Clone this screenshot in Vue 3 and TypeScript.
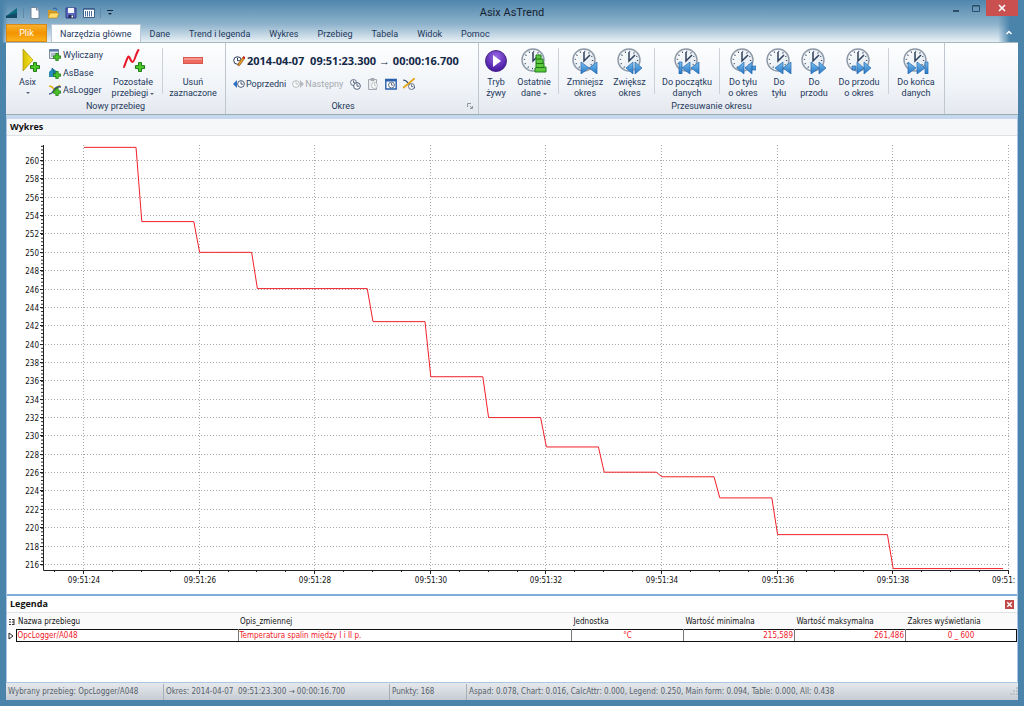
<script setup lang="ts">
import { ref } from 'vue'

interface BigButton {
  id: string
  lines: string[]
  width: number
  menu?: boolean
}

const tabs = ['Narzędzia główne', 'Dane', 'Trend i legenda', 'Wykres', 'Przebieg', 'Tabela', 'Widok', 'Pomoc']
const activeTab = ref(tabs[0])

const periodButtons: (BigButton | null)[] = [
  { id: 'live', lines: ['Tryb', 'żywy'], width: 34 },
  { id: 'last', lines: ['Ostatnie', 'dane'], width: 42, menu: true },
  null,
  { id: 'shrink', lines: ['Zmniejsz', 'okres'], width: 46 },
  { id: 'grow', lines: ['Zwiększ', 'okres'], width: 43 },
  null,
  { id: 'start', lines: ['Do początku', 'danych'], width: 58 },
  null,
  { id: 'backp', lines: ['Do tyłu', 'o okres'], width: 40 },
  { id: 'back', lines: ['Do', 'tyłu'], width: 32 },
  { id: 'fwd', lines: ['Do', 'przodu'], width: 38 },
  { id: 'fwdp', lines: ['Do przodu', 'o okres'], width: 52 },
  null,
  { id: 'end', lines: ['Do końca', 'danych'], width: 48 },
]

const overlays: Record<string, string> = {
  shrink: 'M9 14l8 6-8 6zM25 14v12l-8-6z',
  grow: 'M16 14v12l-7-6zM18 14l7 6-7 6z',
  start: 'M5 14h3v12H5zM16 14v12l-8-6zM25 14v12l-8-6z',
  backp: 'M14 14v12l-7-6zM22 14v12l-7-6zM22 18h4v4h-4z',
  back: 'M17 14v12l-8-6zM25 14v12l-8-6z',
  fwd: 'M10 14l8 6-8 6zM18 14l7 6-7 6z',
  fwdp: 'M6 18h4v4H6zM11 14l7 6-7 6zM18 14l7 6-7 6z',
  end: 'M5 14l8 6-8 6zM14 14l8 6-8 6zM22 14h3v12h-3z',
}

const X0 = 77
const SEC = 57.8
const Y0 = 25
const UNIT = 9.18
const px = (t: number) => X0 + (t - 24) * SEC
const py = (v: number) => Y0 + (260 - v) * UNIT

const levels: [number, number][] = [
  [24, 261.486], [25, 253.4], [26, 250.05], [27, 246.1], [29, 242.5], [30, 236.5], [31, 232.05],
  [32, 228.85], [33, 226.1], [34, 225.6], [35, 223.3], [36, 219.3], [38, 215.6],
]
const linePoints = levels
  .map(([t, v], i) => {
    const end = i + 1 < levels.length ? levels[i + 1][0] - 0.1 : 39.9
    return `${px(t)},${py(v)} ${px(end)},${py(v)}`
  })
  .join(' ')

const yMajor = Array.from({ length: 23 }, (_, i) => 260 - i * 2)
const yMinor = Array.from({ length: 115 }, (_, i) => 261.6 - i * 0.4)
const xMajor = Array.from({ length: 9 }, (_, i) => 24 + i * 2)
const xMinor = Array.from({ length: 33 }, (_, i) => 23.5 + i * 0.5)

const columns = ['Nazwa przebiegu', 'Opis_zmiennej', 'Jednostka', 'Wartość minimalna', 'Wartość maksymalna', 'Zakres wyświetlania']
const legendOpen = ref(true)
</script>

<template>
  <div class="window">
    <svg class="defs" aria-hidden="true">
      <defs>
        <linearGradient id="gBlue" x1="0" y1="0" x2="0" y2="1">
          <stop offset="0" stop-color="#7cc0ee" /><stop offset="1" stop-color="#2474c4" />
        </linearGradient>
        <linearGradient id="gFace" x1="0" y1="0" x2="1" y2="1">
          <stop offset="0" stop-color="#ffffff" /><stop offset="1" stop-color="#dde6ee" />
        </linearGradient>
        <radialGradient id="gLive" cx=".5" cy=".3" r=".7">
          <stop offset="0" stop-color="#9a6be8" /><stop offset="1" stop-color="#41129c" />
        </radialGradient>
        <linearGradient id="gYellow" x1="0" y1="0" x2="1" y2="0">
          <stop offset="0" stop-color="#d8c000" /><stop offset="1" stop-color="#f8e428" />
        </linearGradient>
        <symbol id="clock" viewBox="0 0 26 26">
          <circle cx="12" cy="12" r="11" fill="url(#gFace)" stroke="#8e99a8" stroke-width="1.4" />
          <circle cx="12" cy="12" r="8.6" fill="none" stroke="#3c4c66" stroke-width="1.4" stroke-dasharray="1 3.5" />
          <path d="M12 4v9l6-6" fill="none" stroke="#2f405c" stroke-width="1.5" />
        </symbol>
        <symbol id="plus" viewBox="0 0 10 10">
          <path d="M3.5 .6h3v3h3v3h-3v3h-3v-3h-3v-3h3z" fill="#4cc828" stroke="#1c7a12" stroke-width="1" />
        </symbol>
        <symbol id="miniclock" viewBox="0 0 10 10">
          <circle cx="5" cy="5" r="4.2" fill="#fff" stroke="currentColor" />
          <path d="M5 2v3.2h2.6" fill="none" stroke="currentColor" />
        </symbol>
      </defs>
    </svg>

    <header class="titlebar">
      <div class="quick">
        <svg class="logo" viewBox="0 0 12 12"><path d="M0 9L11 1v10H0z" fill="#0b6a7c" /><path d="M0 9l11-3v5H0z" fill="#124a66" /></svg>
        <i class="qsep"></i>
        <button aria-label="Nowy"><svg viewBox="0 0 12 12"><path d="M2 .5h5.500L10 3v8.500H2z" fill="#fff" stroke="#72839a" /><path d="M7.500 .5V3H10" fill="#dde6ef" stroke="#72839a" /></svg></button>
        <button aria-label="Otwórz"><svg viewBox="0 0 12 12"><path d="M1 3h4l1 1h4v7H1z" fill="#d59a26" /><path d="M3 6h9l-2 5H1z" fill="#ffdc6a" stroke="#b98012" stroke-width=".6" /><path d="M6 2q3-2 4 1" fill="none" stroke="#2d68ae" stroke-width="1.2" /></svg></button>
        <button aria-label="Zapisz"><svg viewBox="0 0 12 12"><path d="M1 1h10v10H1z" fill="#5a68be" stroke="#343e86" /><path d="M3 1h6v5H3z" fill="#f4f6fc" /><path d="M3.500 8h5v3h-5z" fill="#242b55" /><path d="M6.500 8.500h1.500v2H6.500z" fill="#fff" /></svg></button>
        <button aria-label="Tabela"><svg viewBox="0 0 12 12"><path d="M.5 1.500h11v9H.5z" fill="#fff" stroke="#38618e" /><path d="M.5 2h11" stroke="#38618e" stroke-width="1.500" /><path d="M2.500 4v5.500M4.500 4v5.500M6.500 4v5.500M8.500 4v5.500" stroke="#4a6f98" /></svg></button>
        <i class="qsep"></i>
        <button class="more" aria-label="Dostosuj"><svg viewBox="0 0 8 8"><path d="M1 1.500h6" stroke="#17283d" /><path d="M2 4h4L4 6z" fill="#17283d" /></svg></button>
      </div>
      <h1>Asix AsTrend</h1>
      <div class="winbtns">
        <button class="wb" aria-label="Minimalizuj"><svg viewBox="0 0 10 10"><path d="M2 7h6" stroke="#2c4d68" stroke-width="2" /></svg></button>
        <button class="wb" aria-label="Maksymalizuj"><svg viewBox="0 0 10 10"><path d="M1.500 1.500h7v6h-7zM1.500 2h7" fill="none" stroke="#2c4d68" /></svg></button>
        <button class="close" aria-label="Zamknij"><svg viewBox="0 0 10 10"><path d="M2 2l6 6M8 2L2 8" stroke="#fff" stroke-width="1.600" /></svg></button>
      </div>
    </header>

    <nav class="tabs">
      <button class="file">Plik</button>
      <button v-for="t in tabs" :key="t" class="tab" :class="{ active: t === activeTab }" @click="activeTab = t">{{ t }}</button>
      <button class="fold" aria-label="Zwiń wstążkę"><svg viewBox="0 0 8 8"><path d="M1.500 5L4 2.500 6.500 5" fill="none" stroke="#fff" stroke-width="1.500" /></svg></button>
    </nav>

    <section class="ribbon">
      <div class="group g1">
        <div class="tools">
          <button class="big asix">
            <svg viewBox="0 0 26 26"><path d="M8 1l10 11L8 23z" fill="url(#gYellow)" stroke="#a99708" stroke-width=".7" /><use href="#plus" x="15" y="14" width="10" height="10" /></svg>
            <span>Asix</span><span class="caret"></span>
          </button>
          <div class="stack">
            <button class="small"><svg viewBox="0 0 12 12"><path d="M.5 .5h9v9h-9z" fill="#dfe6ee" stroke="#7f8e9f" /><path d="M.5 1.500h9" stroke="#5878a8" stroke-width="2" /><path d="M2 5h6M2 7h6" stroke="#8090a0" /><use href="#plus" x="4" y="4" width="8" height="8" /></svg>Wyliczany</button>
            <button class="small"><svg viewBox="0 0 12 12"><path d="M0 10V5l2-2 1-2 3 2 3 2v5z" fill="#2a8cb8" /><path d="M3 1l2 3v6" fill="none" stroke="#145c80" /><use href="#plus" x="4" y="4" width="8" height="8" /></svg>AsBase</button>
            <button class="small"><svg viewBox="0 0 12 12"><path d="M0 2l3 1 3 3 5-5" fill="none" stroke="#e0b010" stroke-width="1.600" /><path d="M0 10q3 0 5-4t7-3" fill="none" stroke="#344f72" stroke-width="1.400" /><use href="#plus" x="4" y="4" width="8" height="8" /></svg>AsLogger</button>
          </div>
          <button class="big poz">
            <svg viewBox="0 0 26 26"><path d="M4 19c2-5 3-9 4.500-10.500C10 8 10.500 14 12.500 14S16 5 18.500 2" fill="none" stroke="#e81828" stroke-width="2" stroke-linejoin="round" stroke-linecap="round" /><use href="#plus" x="15" y="14" width="10" height="10" /></svg>
            <span>Pozostałe</span><span>przebiegi <i class="caret"></i></span>
          </button>
          <i class="sep"></i>
          <button class="big usun">
            <svg viewBox="0 0 26 26"><rect x="3.500" y="9.500" width="19" height="6" fill="#ee6a60" stroke="#d8574e" /><path d="M4 11h18" stroke="#f8a49c" stroke-width="1.500" /></svg>
            <span>Usuń</span><span>zaznaczone</span>
          </button>
        </div>
        <div class="caption">Nowy przebieg</div>
      </div>

      <div class="group g2">
        <div class="period">
          <button class="range">
            <svg viewBox="0 0 12 12"><use href="#miniclock" x="0" y="1" width="9" height="9" /><path d="M5 9l5-7 2 1-5 7-2 1z" fill="#e8a020" stroke="#7c3a20" stroke-width=".6" /><path d="M10 2l2 1" stroke="#c82020" stroke-width="2" /></svg>
            <span>2014-04-07&nbsp; 09:51:23.300 → 00:00:16.700</span>
          </button>
          <div class="nav">
            <button class="prev"><svg viewBox="0 0 12 12"><path d="M4 2v8L0 6z" fill="#2c72c4" /><use href="#miniclock" x="4" y="2" width="8" height="8" /></svg>Poprzedni</button>
            <button class="next" disabled><svg viewBox="0 0 12 12"><use href="#miniclock" x="0" y="2" width="8" height="8" /><path d="M8 2v8l4-4z" fill="#b8bcc2" /></svg>Następny</button>
            <button class="ic" aria-label="Kopiuj okres"><svg viewBox="0 0 12 12"><use href="#miniclock" x="1" y="1" width="7" height="7" /><use href="#miniclock" x="4" y="4" width="8" height="8" /></svg></button>
            <button class="ic off" aria-label="Wklej okres" disabled><svg viewBox="0 0 12 12"><path d="M1.500 1.500h8v10h-8zM4 .5h3v2H4z" fill="#eceef1" stroke="currentColor" /><use href="#miniclock" x="4" y="4" width="7" height="7" /></svg></button>
            <button class="ic" aria-label="Kalendarz"><svg viewBox="0 0 12 12"><path d="M.8 1.500h10.400v9.500H.8z" fill="#fff" stroke="#2860ae" stroke-width="1.400" /><path d="M.5 2.500h11" stroke="#2860ae" stroke-width="2" /><use href="#miniclock" x="3" y="3.500" width="7" height="7" /></svg></button>
            <button class="ic" aria-label="Okres wykresu"><svg viewBox="0 0 12 12"><path d="M0 2q3 0 5 3t7 5" fill="none" stroke="#344f72" stroke-width="1.200" /><path d="M0 10l5-4 7-6" fill="none" stroke="#e4a818" stroke-width="1.800" /><use href="#miniclock" x="5" y="5" width="7" height="7" /></svg></button>
          </div>
        </div>
        <div class="caption okres">Okres<button class="launch" aria-label="Opcje okresu"><svg viewBox="0 0 6 6"><path d="M.5 4V.5H4M3 3l2 2M5.500 3v2.500H3" fill="none" stroke="#8d97a3" /></svg></button></div>
      </div>

      <div class="group g3">
        <div class="tools">
          <template v-for="(b, i) in periodButtons" :key="i">
            <i v-if="!b" class="sep"></i>
            <button v-else class="big" :style="{ width: b.width + 'px' }">
              <svg v-if="b.id === 'live'" viewBox="0 0 26 26"><circle cx="13" cy="13" r="10.500" fill="url(#gLive)" stroke="#4c2a88" /><path d="M10 7l8 6-8 6z" fill="#fff" /></svg>
              <svg v-else viewBox="0 0 26 26">
                <use href="#clock" width="26" height="26" />
                <template v-if="b.id === 'last'">
                  <path d="M15 7h5v4h2v4h1v4h2v5H14v-4h1z" fill="#5cc83c" stroke="#23801a" />
                  <path d="M15 11h5M15 15.500h7M15 19.500h8" stroke="#1f7418" stroke-width="1.200" />
                </template>
                <path v-else :d="overlays[b.id]" fill="url(#gBlue)" stroke="#2468b0" stroke-width=".7" />
              </svg>
              <span>{{ b.lines[0] }}</span><span>{{ b.lines[1] }} <i v-if="b.menu" class="caret"></i></span>
            </button>
          </template>
        </div>
        <div class="caption">Przesuwanie okresu</div>
      </div>
    </section>

    <main class="panels">
      <section class="chart">
        <h2>Wykres</h2>
        <svg viewBox="0 0 1010 458" class="plot" role="img" aria-label="Wykres">
          <g class="grid">
            <path v-for="v in yMajor" :key="v" :d="`M38 ${Math.round(py(v)) - 0.5}H1002`" />
            <path v-for="t in xMajor" :key="t" :d="`M${Math.round(px(t)) - 0.5} 9V434`" />
          </g>
          <g class="axis">
            <path d="M36.500 9V434.500H1002" />
            <path v-for="v in yMinor" :key="v" :d="`M34 ${py(v)}h2`" />
            <path v-for="v in yMajor" :key="v" :d="`M33 ${Math.round(py(v)) - 0.5}h3`" />
            <path v-for="t in xMinor" :key="t" :d="`M${Math.round(px(t)) - 0.5} 434v2`" />
            <path v-for="t in xMajor" :key="t" :d="`M${Math.round(px(t)) - 0.5} 434v4`" />
          </g>
          <g class="labels">
            <text v-for="v in yMajor" :key="v" x="32" :y="Math.round(py(v)) + 3" text-anchor="end">{{ v }}</text>
            <text v-for="t in xMajor.slice(0, -1)" :key="t" :x="Math.round(px(t))" y="447" text-anchor="middle">09:51:{{ t }}</text>
            <text x="985" y="447">09:51:</text>
          </g>
          <polyline :points="linePoints" class="trace" />
        </svg>
      </section>

      <section v-if="legendOpen" class="legend">
        <h2>Legenda <button aria-label="Zamknij legendę" @click="legendOpen = false"><svg viewBox="0 0 8 8"><path d="M2 2l4 4M6 2L2 6" stroke="#fff" stroke-width="1.300" /></svg></button></h2>
        <table>
          <colgroup><col class="c0" /><col class="c1" /><col /><col class="c3" /><col class="c4" /><col class="c4" /><col class="c4" /></colgroup>
          <thead>
            <tr>
              <th><svg viewBox="0 0 6 8"><path d="M0 1.500h2M0 4h2M0 6.500h2M3 1.500h2M3 4h2M3 6.500h2M5 1v6" stroke="#333" /></svg></th>
              <th v-for="c in columns" :key="c">{{ c }}</th>
            </tr>
          </thead>
          <tbody>
            <tr>
              <td class="mark"><svg viewBox="0 0 6 8"><path d="M1 1l4 3-4 3z" fill="#fff" stroke="#222" /></svg></td>
              <td class="first">OpcLogger/A048</td>
              <td>Temperatura spalin między I i II p.</td>
              <td class="mid">°C</td>
              <td class="num">215,589</td>
              <td class="num">261,486</td>
              <td class="mid">0 _ 600</td>
            </tr>
          </tbody>
        </table>
      </section>
    </main>

    <footer class="status">
      <span class="s1">Wybrany przebieg: OpcLogger/A048</span>
      <span class="s2">Okres: 2014-04-07&nbsp; 09:51:23.300 → 00:00:16.700</span>
      <span class="s3">Punkty: 168</span>
      <span class="s4">Aspad: 0.078, Chart: 0.016, CalcAttr: 0.000, Legend: 0.250, Main form: 0.094, Table: 0.000, All: 0.438</span>
      <svg class="grip" viewBox="0 0 10 10"><path d="M8 1h2M8 4h2M5 4h2M8 7h2M5 7h2M2 7h2" stroke="#b4bbc3" stroke-width="1.500" /></svg>
    </footer>
  </div>
</template>

<style>
html, body { margin: 0; }
</style>

<style scoped>
* { box-sizing: border-box; }
.window {
  min-height: 100vh; display: flex; flex-direction: column; padding: 0 6px 6px;
  background:
    linear-gradient(90deg, #4a84ab 2px, transparent 8px, transparent calc(100% - 26px), #4a84ab calc(100% - 14px)),
    linear-gradient(#4f86ad 0, #8db2cb 24px, #e8f0f5 42px, #4a84ab 43px);
  font-family: Roboto, "Open Sans", sans-serif; font-size: 9px; color: #24385c; overflow: hidden;
}
button { font: inherit; color: inherit; background: none; border: 0; padding: 0; margin: 0; }
h1, h2 { margin: 0; }
svg { display: block; flex: none; }
.defs { position: absolute; width: 0; height: 0; }
.titlebar { height: 24px; display: grid; grid-template-columns: 1fr auto 1fr; align-items: center; }
.titlebar h1 { font-size: 11px; font-weight: 400; color: #14222f; line-height: 24px; padding-top: 1px; }
.quick { display: flex; align-items: center; gap: 6px; }
.quick svg { width: 12px; height: 12px; }
.quick .more svg { width: 8px; height: 8px; }
.qsep { width: 1px; height: 10px; background: #5f88a5; margin: 0 -1px; }
.winbtns { display: flex; justify-content: flex-end; align-self: start; }
.winbtns svg { width: 10px; height: 10px; }
.wb { width: 20px; height: 18px; display: flex; justify-content: center; align-items: center; }
.close { width: 32px; height: 16px; background: #c9504f; display: flex; justify-content: center; align-items: center; }
.tabs { height: 18px; display: flex; align-items: flex-end; line-height: 20px; }
.file { width: 41px; height: 18px; color: #fff; background: linear-gradient(#f9b130, #f29400 50%, #fbb21c); border: 1px solid #d98a14; line-height: 16px; margin-right: 4px; }
.tab { padding: 0 10px 0 9px; height: 18px; }
.tab.active { background: #fdfeff; padding: 0 8px; border: 1px solid #b9c8d4; border-bottom: 0; line-height: 18px; }
.fold { margin-left: auto; width: 18px; height: 18px; display: flex; align-items: center; justify-content: center; }
.fold svg { width: 8px; height: 8px; }
.ribbon { height: 73px; display: flex; background: linear-gradient(#fdfeff, #f1f4f8 60%, #e4e8ee); border-top: 1px solid #a4b8c0; border-bottom: 1px solid #9aaeb0; }
.group { display: flex; flex-direction: column; border-right: 1px solid #c0c6ce; height: 71px; padding-top: 5px; }
.g1 { width: 220px; }
.g2 { width: 253px; }
.g3 { width: 466px; }
.tools { display: flex; height: 51px; }
.big { display: flex; flex-direction: column; align-items: center; line-height: 11px; white-space: nowrap; }
.big svg { width: 26px; height: 26px; margin-bottom: 3px; }
.sep { width: 1px; height: 46px; background: #ccd1d8; margin: 0 3px; }
.caret { display: inline-block; border: 2px solid transparent; border-top-color: #55637a; border-bottom: 0; vertical-align: middle; }
.big > .caret { margin-top: 4px; }
.asix { width: 43px; }
.stack { width: 58px; display: flex; flex-direction: column; margin-top: -2px; }
.small { height: 18px; display: flex; align-items: center; gap: 2px; white-space: nowrap; }
.small svg { width: 12px; height: 12px; }
.poz { width: 52px; }
.usun { width: 54px; }
.caption { line-height: 14px; text-align: center; position: relative; }
.okres { padding-right: 18px; }
.launch { position: absolute; right: 5px; top: 4px; }
.launch svg { width: 6px; height: 6px; }
.period { height: 51px; padding-left: 7px; }
.range { display: flex; align-items: center; gap: 2px; font-family: "Open Sans", "Noto Sans", sans-serif; font-size: 11px; font-weight: 700; line-height: 26px; color: #142848; white-space: nowrap; }
.range svg, .nav svg { width: 12px; height: 12px; }
.nav { display: flex; align-items: center; height: 20px; gap: 6px; }
.nav button { display: flex; align-items: center; gap: 1px; }
.next, .nav .off { color: #a4a9b0; }
.panels { flex: 1; display: flex; flex-direction: column; background: #fff; border: 1px solid #a9c6e6; border-top: 4px solid #c5d8ee; }
h2 { font-family: "Open Sans", "Noto Sans", sans-serif; font-size: 9px; font-weight: 700; color: #111; line-height: 16px; padding: 0 3px; background: #f6f7f9; border-bottom: 1px solid #dfe2e6; }
.plot { width: 100%; }
.grid path { stroke: #a8a8a8; stroke-dasharray: 1 2; }
.axis path { stroke: #222; fill: none; }
.labels { font-family: "DejaVu Sans Condensed", "Open Sans", sans-serif; font-size: 8px; fill: #111; }
.trace { fill: none; stroke: #f02028; stroke-width: 1; }
.legend { border-top: 2px solid #7faede; flex: 1; }
.legend h2 { display: flex; justify-content: space-between; align-items: center; background: #fff; }
.legend h2 button { width: 9px; height: 9px; background: #c04848; }
.legend h2 svg { width: 9px; height: 9px; }
table { width: 100%; table-layout: fixed; border-collapse: collapse; color: #111; font-family: "DejaVu Sans Condensed", "Open Sans", sans-serif; font-size: 8px; }
.c0 { width: 9px; } .c1 { width: 222px; } .c3 { width: 112px; } .c4 { width: 111px; }
th { font-weight: 400; text-align: left; padding: 2px 2px 0; height: 16px; background: #fafafa; white-space: nowrap; }
th svg, .mark svg { width: 6px; height: 8px; }
td { height: 12px; line-height: 10px; padding: 1px 1px 0; color: #f01828; border: 1px solid #777; border-top: 1px solid #111; border-bottom: 1px solid #111; }
td.mark { border: 0; }
td.first { border-left: 1px solid #111; }
td:last-child { border-right: 1px solid #111; }
.mid { text-align: center; }
.num { text-align: right; }
.status { height: 17px; display: flex; align-items: center; background: linear-gradient(#e6e9ec, #c6ccd2); color: #56616c; font-family: "DejaVu Sans Condensed", "Open Sans", sans-serif; font-size: 8px; line-height: 16px; white-space: nowrap; }
.status span { padding-left: 2px; border-right: 1px solid #a8afb7; }
.s1 { width: 158px; } .s2 { width: 226px; } .s3 { width: 77px; }
.status .s4 { flex: 1; border: 0; }
.grip { width: 10px; height: 10px; }
</style>
